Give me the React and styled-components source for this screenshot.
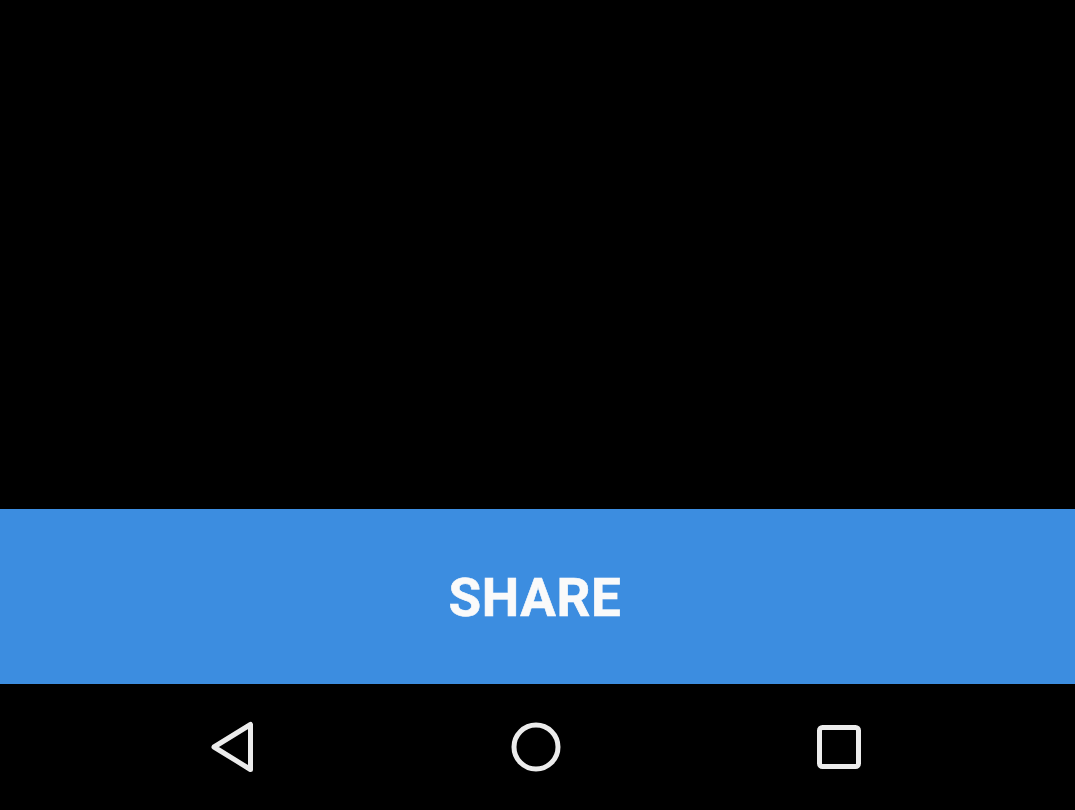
import React from 'react';
import styled, { createGlobalStyle } from 'styled-components';

const GlobalStyle = createGlobalStyle`
    html, body {
        margin: 0;
        padding: 0;
        background: #000;
    }
`;

const Screen = styled.div`
    display: flex;
    flex-direction: column;
    width: 1075px;
    height: 810px;
    background: #000;
`;

const Content = styled.div`
    flex: 1;
    background: #000;
`;

const ShareButton = styled.button`
    height: 175px;
    border: none;
    padding: 2px 5px 0 0;
    background: #3c8de0;
    color: #fafafa;
    font-family: Roboto, "Liberation Sans", sans-serif;
    font-weight: 700;
    font-size: 53px;
    letter-spacing: 0.6px;
    -webkit-text-stroke: 0.6px #fafafa;
    display: flex;
    align-items: center;
    justify-content: center;
`;

const NavBar = styled.nav`
    height: 126px;
    display: flex;
    justify-content: center;
    align-items: center;
    padding-right: 4px;
    background: #000;
`;

const NavButton = styled.div`
    width: 303px;
    display: flex;
    justify-content: center;
    align-items: center;
    color: #ececec;
`;

export default function App() {
    return (
        <Screen>
            <GlobalStyle />
            <Content />
            <ShareButton>SHARE</ShareButton>
            <NavBar>
                <NavButton>
                    <svg width="60" height="60" viewBox="0 0 60 60" fill="none" stroke="currentColor" strokeWidth="5" strokeLinejoin="round">
                        <polygon points="11,30 47.5,7.5 47.5,52.5" />
                    </svg>
                </NavButton>
                <NavButton>
                    <svg width="60" height="60" viewBox="0 0 60 60" fill="none" stroke="currentColor" strokeWidth="5">
                        <circle cx="30" cy="30" r="22" />
                    </svg>
                </NavButton>
                <NavButton>
                    <svg width="60" height="60" viewBox="0 0 60 60" fill="none" stroke="currentColor" strokeWidth="5">
                        <rect x="10.5" y="10.5" width="39" height="39" rx="3" />
                    </svg>
                </NavButton>
            </NavBar>
        </Screen>
    );
}
